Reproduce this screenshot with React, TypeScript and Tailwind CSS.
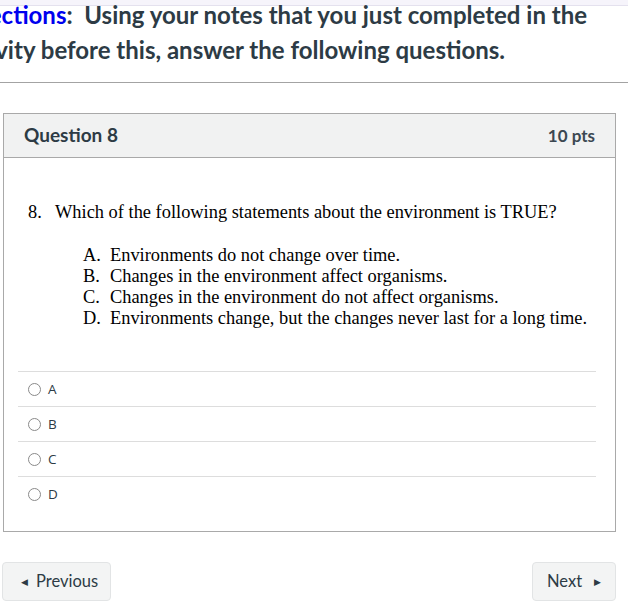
import React from 'react';

const answers = ['A', 'B', 'C', 'D'];

const options = [
  { letter: 'A.', text: 'Environments do not change over time.' },
  { letter: 'B.', text: 'Changes in the environment affect organisms.' },
  { letter: 'C.', text: 'Changes in the environment do not affect organisms.' },
  { letter: 'D.', text: 'Environments change, but the changes never last for a long time.' },
];

export default function App() {
  return (
    <div
      className="w-[628px] h-[604px] overflow-hidden bg-white text-[#2d3b45]"
      style={{ fontFamily: 'Lato, "Open Sans", sans-serif' }}
    >
      {/* top strip */}
      <div className="h-[6px] bg-[#f6f4fb] border-b border-[#e4e1ee]" />

      {/* directions */}
      <div className="-ml-[44px] whitespace-nowrap text-[24px] font-bold leading-[35px] -mt-[9px]">
        <div>
          <span className="text-[#0000ee]">Directions</span>:&nbsp; Using your notes that you just completed in the
        </div>
        <div>activity before this, answer the following questions.</div>
      </div>

      <hr className="mt-[15px] border-t border-[#a3a3a3]" />

      {/* question card */}
      <div className="ml-[3px] mt-[30px] w-[613px] border border-[#a9a9a9]">
        <div className="h-[44px] flex items-center justify-between px-[20px] bg-[#f1f2f2] border-b border-[#a9a9a9]">
          <span className="text-[19px] font-bold">Question 8</span>
          <span className="text-[17px] font-bold text-[#3c4852]">10 pts</span>
        </div>

        <div className="pl-[14px] pr-[19px] pt-[44px] pb-[20px]">
          <div
            className="text-[18.4px] leading-[21px] text-black"
            style={{ fontFamily: '"Liberation Serif", "Times New Roman", serif' }}
          >
            <div className="flex pl-[10px]">
              <span className="w-[27px]">8.</span>
              <span>Which of the following statements about the environment is TRUE?</span>
            </div>
            <div className="mt-[22px] pl-[65px]">
              {options.map((o) => (
                <div key={o.letter} className="flex">
                  <span className="w-[27px]">{o.letter}</span>
                  <span>{o.text}</span>
                </div>
              ))}
            </div>
          </div>

          <div className="mt-[42px]">
            {answers.map((a) => (
              <div key={a} className="h-[35px] border-t border-[#dddddd] flex items-center">
                <span className="ml-[10px] w-[13px] h-[13px] rounded-full border border-[#8a8a8a] bg-white" />
                <span
                  className="ml-[7px] text-[13.5px] text-[#2d3b45]"
                  style={{ fontFamily: '"Open Sans", sans-serif' }}
                >
                  {a}
                </span>
              </div>
            ))}
          </div>
        </div>
      </div>

      {/* nav buttons */}
      <div className="mt-[30px] flex justify-between pl-[2px] pr-[12px]">
        <button className="h-[39px] w-[109px] flex items-center pl-[18px] gap-[8px] rounded-[4px] border border-[#e2e4e5] bg-[#f3f4f4] text-[16.5px] text-[#2d3b45]">
          <span className="text-[9px]">◀</span>
          <span>Previous</span>
        </button>
        <button className="h-[39px] w-[84px] flex items-center pl-[14px] gap-[12px] rounded-[4px] border border-[#e2e4e5] bg-[#f3f4f4] text-[16.5px] text-[#2d3b45]">
          <span>Next</span>
          <span className="text-[9px]">▶</span>
        </button>
      </div>
    </div>
  );
}
